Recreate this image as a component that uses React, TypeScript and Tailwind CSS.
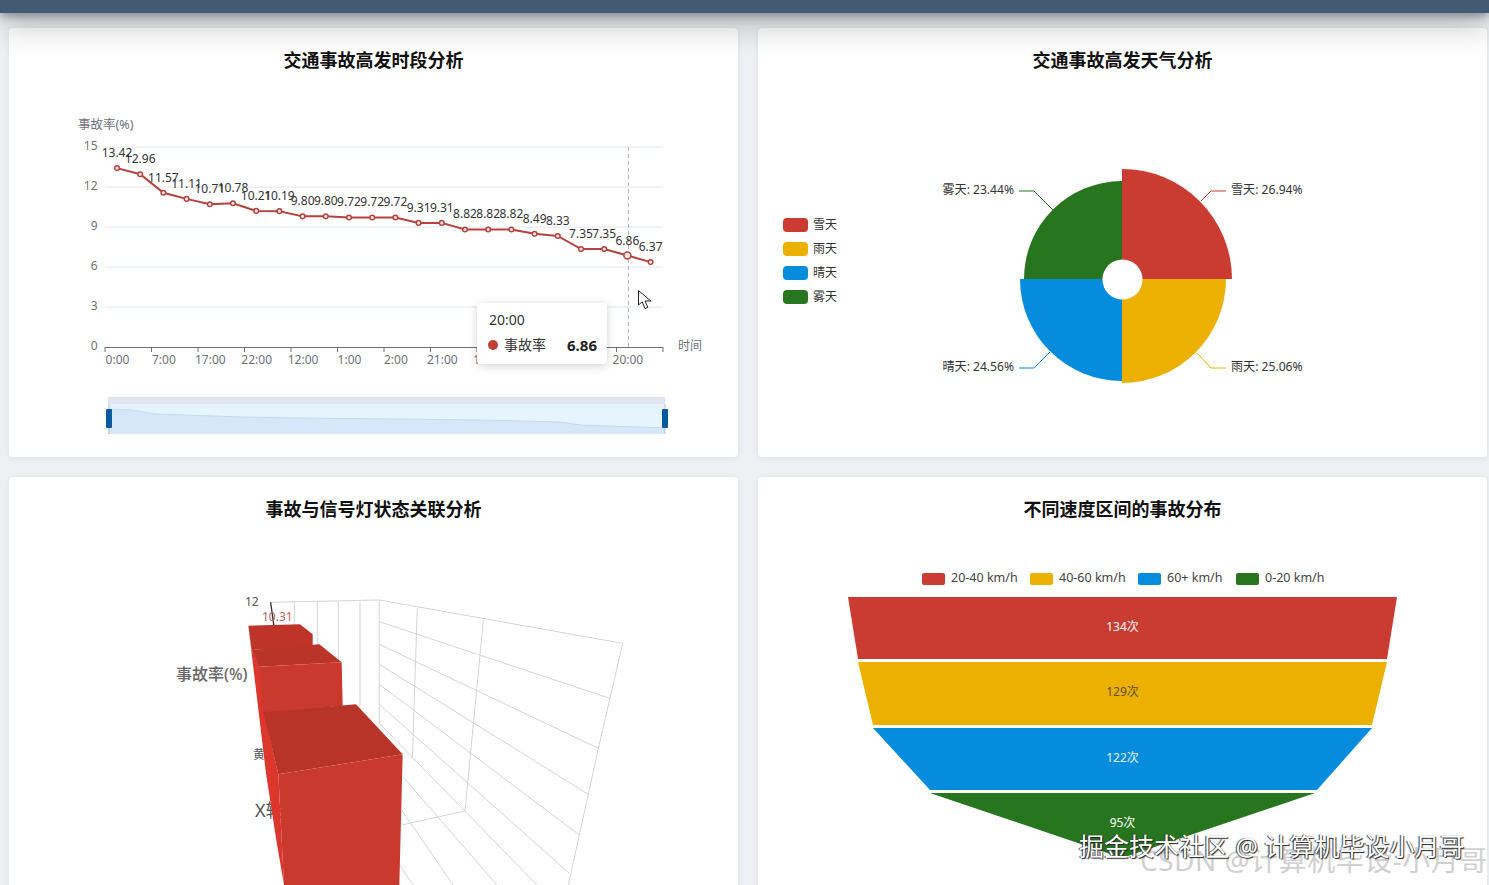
const values = [13.42, 12.96, 11.57, 11.11, 10.71, 10.78, 10.21, 10.19, 9.8, 9.8, 9.72, 9.72, 9.72, 9.31, 9.31, 8.82, 8.82, 8.82, 8.49, 8.33, 7.35, 7.35, 6.86, 6.37];
const px = (i: number) => 117 + 23.2 * i;
const py = (v: number) => 347 - v * 13.33;
const xLabels = ["0:00", "7:00", "17:00", "22:00", "12:00", "1:00", "2:00", "21:00", "14:00", "3:00", "10:00", "20:00"];
const zoomLine = "M108 409 L132 410 L155 414 L242 417 L295 418 L395 419 L480 420 L560 422 L580 425 L665 428";

function Card({ title, children }: { title: string; children: React.ReactNode }) {
  return (
    <div className="relative h-[429px] bg-white rounded-sm shadow-[0_1px_6px_rgba(0,0,0,0.07)] pt-[18px]">
      <h2 className="text-center text-lg leading-7 font-bold text-[#111] mb-px">{title}</h2>
      {children}
    </div>
  );
}

function LineChart() {
  const pts = values.map((v, i) => `${px(i)},${py(v)}`).join(" ");
  return (
    <svg viewBox="9 75 729 382" className="block w-[729px] h-[382px]">
      <text x="78" y="129" fontSize="12.5" fill="#6e7079">事故率(%)</text>
      {[0, 3, 6, 9, 12, 15].map((t) => (
        <g key={t}>
          {t > 0 && <line x1="105" x2="663" y1={347 - t * 13.33} y2={347 - t * 13.33} stroke="#e0e6f1" />}
          <text x="97.5" y={350 - t * 13.33} textAnchor="end" fontSize="12" fill="#6e7079">{t}</text>
        </g>
      ))}
      <line x1="105" x2="663" y1="347.5" y2="347.5" stroke="#6e7079" />
      {xLabels.map((l, i) => (
        <g key={i}>
          <line x1={105 + 46.5 * i} x2={105 + 46.5 * i} y1="347" y2="352" stroke="#6e7079" />
          <text x={117.5 + 46.4 * i} y="364" textAnchor="middle" fontSize="12" fill="#6e7079">{l}</text>
        </g>
      ))}
      <line x1="663" x2="663" y1="347" y2="352" stroke="#6e7079" />
      <text x="678" y="350" fontSize="12" fill="#6e7079">时间</text>
      <line x1="628.5" x2="628.5" y1="147" y2="347" stroke="#b5b5b5" strokeDasharray="4 3" />
      <polyline points={pts} fill="none" stroke="#b5423c" strokeWidth="2" />
      {values.map((v, i) => (
        <g key={i}>
          <circle cx={px(i)} cy={py(v)} r={i === 22 ? 3.5 : 2.3} fill="#f8ecea" stroke="#b5423c" strokeWidth="1.5" />
          <text x={px(i)} y={py(v) - 11} textAnchor="middle" fontSize="12" fill="#333">{v.toFixed(2)}</text>
        </g>
      ))}
      <path d="M638.5 290.5 L638.5 305 L642.2 301.8 L645 308.5 L647.8 307.3 L645 301 L650.8 301 Z" fill="#fff" stroke="#222" strokeWidth="1" />
      <rect x="108" y="397" width="557" height="37" fill="#e6f4fe" />
      <rect x="108" y="397" width="557" height="7" fill="#e1e5f0" />
      <path d={`${zoomLine} L665 434 L108 434 Z`} fill="#d6e7f9" />
      <path d={zoomLine} fill="none" stroke="#c2dbf2" />
      <line x1="109" x2="109" y1="404" y2="434" stroke="#b9c4d2" />
      <line x1="665" x2="665" y1="404" y2="434" stroke="#b9c4d2" />
      <rect x="106" y="409" width="6" height="19" rx="1" fill="#0b58a2" />
      <rect x="662" y="409" width="6" height="19" rx="1" fill="#0b58a2" />
    </svg>
  );
}

function PieChart() {
  const legend = [["雪天", "#ca3c32"], ["雨天", "#ecb000"], ["晴天", "#058cdc"], ["雾天", "#27751e"]];
  return (
    <svg viewBox="758 75 729 382" className="block w-[729px] h-[382px]">
      {legend.map(([n, c], i) => (
        <g key={n}>
          <rect x="783" y={218 + 24 * i} width="25" height="14" rx="4" fill={c} />
          <text x="813" y={229 + 24 * i} fontSize="12" fill="#333">{n}</text>
        </g>
      ))}
      <path d="M1122 279 L1122 169 A110 110 0 0 1 1232 279 Z" fill="#ca3c32" />
      <path d="M1122 279 L1226 279 A104 104 0 0 1 1122 383 Z" fill="#ecb000" />
      <path d="M1122 279 L1122 381 A102 102 0 0 1 1020 279 Z" fill="#058cdc" />
      <path d="M1122 279 L1024 279 A98 98 0 0 1 1122 181 Z" fill="#27751e" />
      <circle cx="1122.5" cy="279.5" r="20" fill="#fff" />
      <polyline points="1201,201 1211,191 1226,191" fill="none" stroke="#ca3c32" />
      <polyline points="1197,353 1211,368 1226,368" fill="none" stroke="#ecb000" />
      <polyline points="1050,352 1034,368 1019,368" fill="none" stroke="#058cdc" />
      <polyline points="1053,210 1034,191 1019,191" fill="none" stroke="#27751e" />
      <g fontSize="12.1" fill="#333">
        <text x="1231" y="194">雪天: 26.94%</text>
        <text x="1231" y="371">雨天: 25.06%</text>
        <text x="1014" y="371" textAnchor="end">晴天: 24.56%</text>
        <text x="1014" y="194" textAnchor="end">雾天: 23.44%</text>
      </g>
    </svg>
  );
}

function BarChart3D() {
  const hLines: [number, number, number][] = [[45, 1388, 175], [110, 1350, 340], [178, 1315, 490], [238, 1285, 628], [298, 1258, 750], [358, 1228, 865]];
  return (
    <svg viewBox="9 524 729 382" className="block w-[729px] h-[382px]">
      <text x="245" y="606" fontSize="12" fill="#555">12</text>
      <text x="176" y="680" fontSize="16" fontWeight="500" fill="#666">事故率(%)</text>
      <text x="253" y="759" fontSize="12" fill="#555">黄</text>
      <text x="255" y="817" fontSize="18" fill="#555">X轴</text>
      <g transform="translate(160 585) scale(0.33333)" fill="none" stroke="#d4d4d4" strokeWidth="3">
        {[403, 472, 535, 600].map((x) => <line key={x} x1={x} y1="50" x2={x} y2="400" />)}
        <line x1="330" y1="52" x2="658" y2="45" />
        {hLines.map(([y, x2, y2]) => <line key={y} x1="658" y1={y} x2={x2} y2={y2} />)}
        <line x1="658" y1="45" x2="658" y2="415" />
        <line x1="772" y1="68" x2="757" y2="520" />
        <line x1="970" y1="105" x2="915" y2="678" />
        <polyline points="1388,175 1350,340 1315,490 1285,628 1258,750 1225,900" />
        <line x1="658" y1="415" x2="1131" y2="900" />
        <line x1="725" y1="720" x2="915" y2="678" />
        <line x1="729" y1="576" x2="1011" y2="900" />
        <line x1="725" y1="675" x2="879" y2="900" />
        <line x1="720" y1="840" x2="759" y2="900" />
        <line x1="332" y1="52" x2="342" y2="125" stroke="#333" strokeWidth="4" />
      </g>
      <text x="262" y="621" fontSize="12" fill="#c0605c">10.31</text>
      <g transform="translate(160 585) scale(0.33333)">
        <polygon points="265,122 275,195 300,245 312,382 355,568 372,900 348,760 318,565" fill="#dc362d" />
        <polygon points="265,122 420,118 458,148 458,185 275,195" fill="#bf3429" />
        <polygon points="275,195 478,178 545,232 298,245" fill="#bb3429" />
        <polygon points="298,245 545,232 548,362 310,385" fill="#c9392e" />
        <polygon points="310,382 588,358 728,508 355,568" fill="#b93428" />
        <polygon points="355,568 728,508 718,900 372,900" fill="#c9392e" />
      </g>
    </svg>
  );
}

function Funnel() {
  const legend = [[922, "20-40 km/h", "#ca3c32"], [1030, "40-60 km/h", "#ecb000"], [1138, "60+ km/h", "#058cdc"], [1236, "0-20 km/h", "#27751e"]] as const;
  return (
    <svg viewBox="758 524 729 382" className="block w-[729px] h-[382px]">
      {legend.map(([x, t, c]) => (
        <g key={t}>
          <rect x={x} y="573" width="23" height="12" rx="2" fill={c} />
          <text x={x + 29} y="582" fontSize="12.5" fill="#444">{t}</text>
        </g>
      ))}
      <polygon points="848,597 1397,597 1387,659 858,659" fill="#ca3c32" />
      <polygon points="858,662 1387,662 1372,725 873,725" fill="#ecb000" />
      <polygon points="873,728 1372,728 1317,790 930,790" fill="#058cdc" />
      <polygon points="930,793 1315,793 1122,858" fill="#27751e" />
      <g fontSize="12" textAnchor="middle">
        <text x="1122.5" y="631" fill="#fff">134次</text>
        <text x="1122.5" y="696" fill="#5c4f22">129次</text>
        <text x="1122.5" y="762" fill="#e8f4fc">122次</text>
        <text x="1122.5" y="827" fill="#fff">95次</text>
      </g>
    </svg>
  );
}

export default function App() {
  return (
    <div className="relative h-[885px] w-[1489px] overflow-hidden bg-[#eef0f4] font-['Noto_Sans','Noto_Sans_CJK_SC',sans-serif]">
      <div className="relative z-10 h-[13px] bg-[#435a73] shadow-[0_3px_10px_rgba(0,0,0,0.38),0_10px_30px_rgba(0,0,0,0.38)]" />
      <div className="grid grid-cols-2 gap-5 pl-[9px] pr-[2px] pt-[15px]">
        <Card title="交通事故高发时段分析">
          <LineChart />
          <div className="absolute left-[468px] top-[275px] w-[130px] h-[61px] bg-white rounded shadow-[0_2px_10px_rgba(0,0,0,0.18)] pl-[11px] pr-[10px] pt-[7px] text-[#333]">
            <div className="text-sm leading-5 pl-px">20:00</div>
            <div className="flex items-center mt-[5px] text-sm leading-5">
              <span className="w-[10px] h-[10px] rounded-full bg-[#c23f33] mr-[6px]" />
              <span>事故率</span>
              <span className="ml-auto text-[15px] font-bold text-[#222]">6.86</span>
            </div>
          </div>
        </Card>
        <Card title="交通事故高发天气分析"><PieChart /></Card>
        <Card title="事故与信号灯状态关联分析"><BarChart3D /></Card>
        <Card title="不同速度区间的事故分布"><Funnel /></Card>
      </div>
      <div className="absolute left-[1140px] top-[842px] whitespace-nowrap text-[28px] leading-9 text-[#d0d0d0] tracking-[0.5px]">CSDN @计算机毕设-小月哥</div>
      <div className="absolute left-[1079px] top-[830px] whitespace-nowrap text-[25px] leading-8 text-white [text-shadow:1px_1px_1px_#222,-1px_0_1px_#333]">掘金技术社区 @ 计算机毕设小月哥</div>
    </div>
  );
}
